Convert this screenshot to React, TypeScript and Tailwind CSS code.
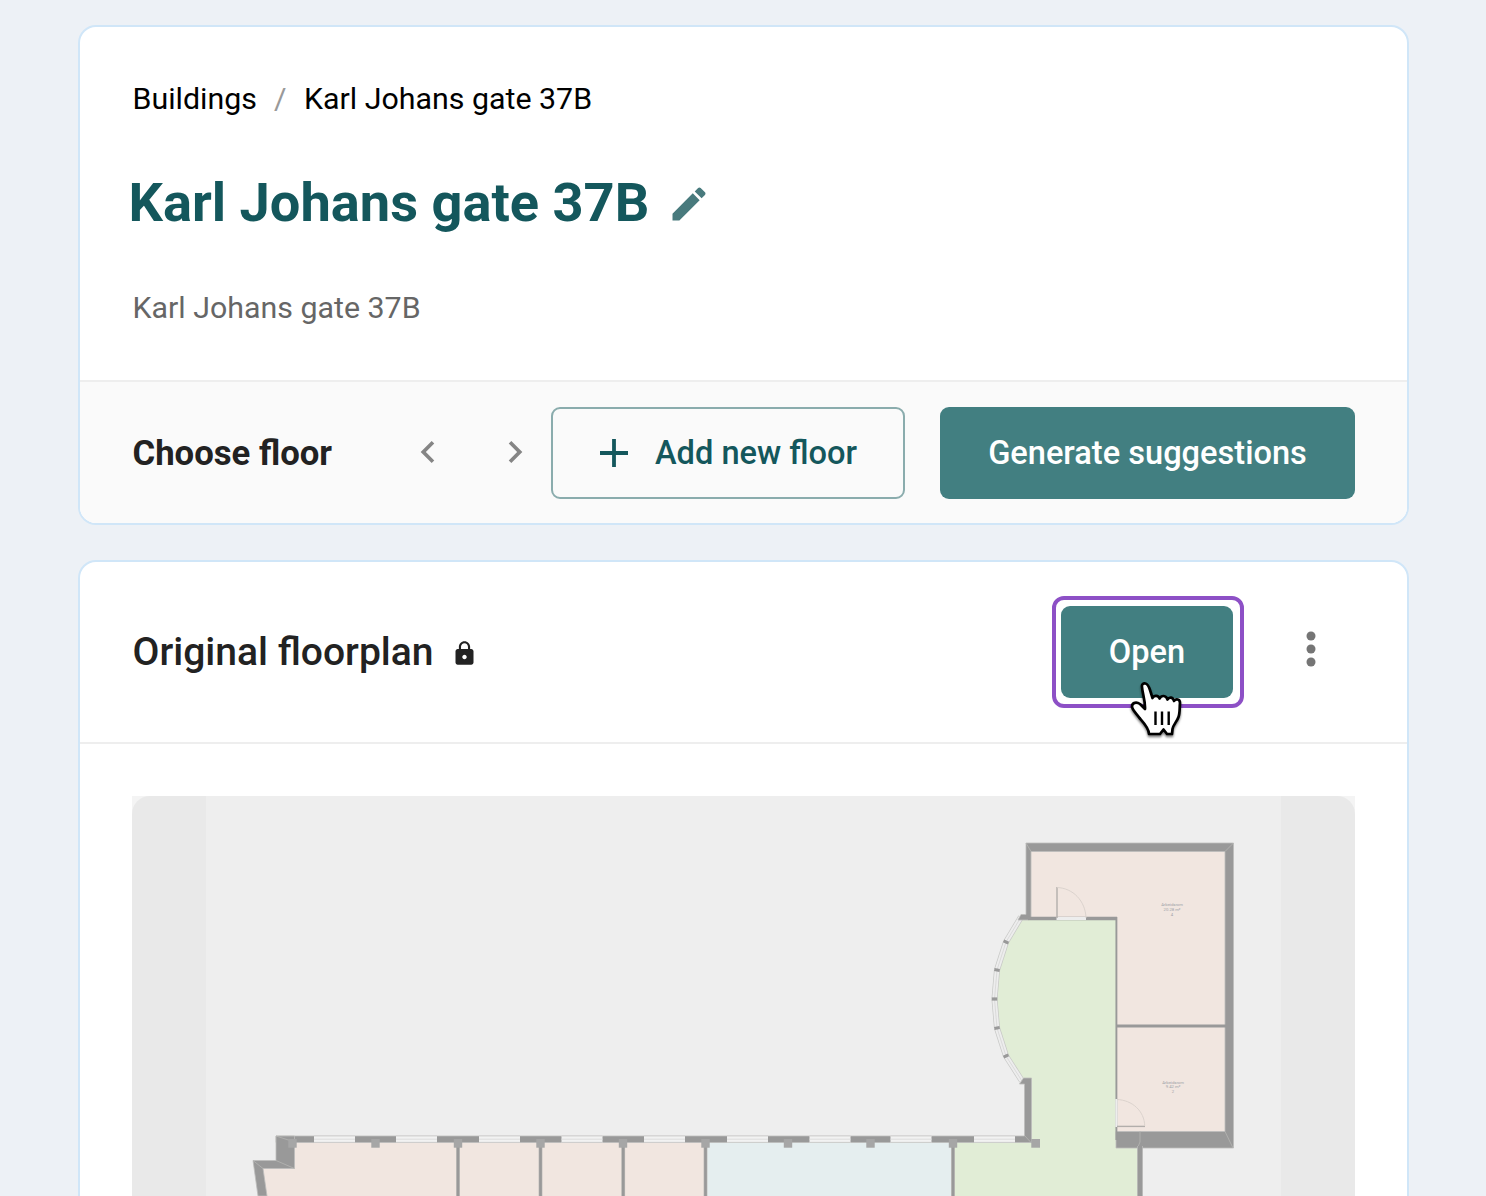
import React from "react";

const WALL = "#999999";
const ROOM = "#f1e6e0";
const GREEN = "#e1edd6";
const BLUE = "#e5eeef";

const wallWindows = [314, 396, 479, 561.5, 644, 727, 809.5, 890.5, 974];
const pillars = [292.5, 375.5, 458, 540.5, 623, 705.5, 788, 870.5, 953];
const partitions = [458, 540.5, 623.2, 705.5, 953];
const bay: [number, number][] = [
  [1021, 917],
  [1006, 942],
  [997, 970],
  [994.5, 999],
  [997, 1028],
  [1006, 1056],
  [1022, 1081],
];

function FloorPlan() {
  return (
    <svg className="block h-full w-full" viewBox="132 796 1223 400" fill="none">
      {/* rooms */}
      <path d="M1029 848H1229V1136H1116V918H1029Z" fill={ROOM} />
      <path d="M1021 918H1116V1136H1140V1196H953V1141H1029V1080H1022L1006 1056L997 1028L994.5 999L997 970L1006 942Z" fill={GREEN} />
      <path d="M285 1141H706V1196H264L256 1162H290Z" fill={ROOM} />
      <path d="M706 1141H953V1196H706Z" fill={BLUE} />

      {/* bay window */}
      {bay.slice(0, -1).map(([x, y], i) => {
        const [x2, y2] = bay[i + 1];
        return (
          <g key={i}>
            <path d={`M${x} ${y}L${x2} ${y2}`} stroke="#c6c7c5" strokeWidth="6" />
            <path d={`M${x} ${y}L${x2} ${y2}`} stroke="#ededed" strokeWidth="4.6" />
            <path d={`M${x} ${y}L${x2} ${y2}`} stroke="#d8d8d8" strokeWidth="0.9" />
          </g>
        );
      })}
      {bay.slice(1, -1).map(([x, y], i) => (
        <rect key={i} x={x - 2.7} y={y - 1.6} width="5.4" height="3.2" fill={WALL} transform={`rotate(${[25, 10, 0, -10, -25][i]} ${x} ${y})`} />
      ))}

      {/* outer walls */}
      <g stroke="#bdbdbb" strokeWidth="0.8" fill={WALL}>
        <path d="M1026 843H1233.500V1148H1116V1131.500H1225V851.500H1031V917.500L1028 920H1018L1021 914.500H1026Z" />
        <path d="M1024.500 1084H1019.500L1023.500 1078H1031.500V1142.500H276V1136H1024.500Z" />
        <path d="M276 1136H294.500V1168.500H263L267 1196H258L253 1160.500H276Z" />
      </g>
      <path d="M1026 843L1031 851.500M1233.500 843L1225 851.500M1225 1131.500L1233 1148M1140 1131V1142L1137.500 1148M1025 1136L1031 1142.500M276 1136L294.500 1142M276 1160.500L294.500 1168.500M253 1160.500L263 1168.500" stroke="#b5b5b3" strokeWidth="0.8" />
      <path d="M1028 918.500H1117" stroke={WALL} strokeWidth="3.400" />
      <path d="M1116.400 917V1140" stroke={WALL} strokeWidth="1.900" />
      <path d="M1117 1026H1226" stroke={WALL} strokeWidth="3.200" />
      <path d="M1140 1146V1196" stroke="#bdbdbb" strokeWidth="5.800" />
      <path d="M1140 1146V1196" stroke={WALL} strokeWidth="4.400" />

      {/* doors */}
      <path d="M1056.500 918.500H1086" stroke="#ededed" strokeWidth="3" />
      <path d="M1057 887V918" stroke="#b2aeab" strokeWidth="1.400" />
      <path d="M1057 887.500C1073 888 1085.500 901 1086 918" stroke="#d8d0cb" strokeWidth="0.900" />
      <path d="M1116.400 1099V1127" stroke="#ededed" strokeWidth="2.200" />
      <path d="M1117 1126.400H1145" stroke="#b2aeab" strokeWidth="1.400" />
      <path d="M1117 1099.500C1132 1100 1144.500 1111 1144.700 1126" stroke="#d8d0cb" strokeWidth="0.900" />

      {/* long facade */}
      {partitions.map((x) => (
        <g key={x}>
          <path d={`M${x} 1142V1196`} stroke="#bdbbb8" strokeWidth="3.8" />
          <path d={`M${x} 1142V1196`} stroke={WALL} strokeWidth="2.6" />
        </g>
      ))}
      {wallWindows.map((x) => (
        <g key={x}>
          <rect x={x} y="1135.500" width="41" height="7.200" fill="#f2f2f2" />
          <path d={`M${x} 1135.900h41M${x} 1142.400h41`} stroke="#c9c8c7" strokeWidth="0.9" />
          <path d={`M${x} 1139.200h41`} stroke="#dadada" strokeWidth="0.9" />
        </g>
      ))}
      {pillars.map((x) => (
        <rect key={x} x={x - 4.2} y="1139" width="8.400" height="8.700" fill="#a6a6a6" />
      ))}
      <rect x="1031.300" y="1139" width="8.700" height="8.700" fill="#a6a6a6" />

      <g fill="#a0a3a8" fontSize="4.2" textAnchor="middle" fontFamily="Roboto, sans-serif">
        <text x="1172" y="905.500">Arbeidsrom</text>
        <text x="1172" y="911">20.28 m²</text>
        <text x="1172" y="915.500">4</text>
        <text x="1173" y="1083.500">Arbeidsrom</text>
        <text x="1173" y="1088">9.42 m²</text>
        <text x="1173" y="1093">2</text>
      </g>
    </svg>
  );
}

function HandCursor() {
  return (
    <svg className="absolute top-[80px] left-[72px] h-[62px] w-[58px] drop-shadow-[0_2px_1px_rgba(0,0,0,0.5)]" viewBox="1128 680 58 62">
      <path
        d="M1142 687C1141.500 684 1143.500 683 1145.500 683.500C1148 684 1149 687 1150 690L1152.500 698C1154 695 1158.500 695 1159.500 698.500C1161.500 695 1166 695 1167.500 699.500C1169.500 696.500 1173 697 1174 701C1176 698.500 1180 699 1180 703C1179.500 708 1180 713 1178.500 717C1177 721.500 1173 725 1172.500 729L1172 734H1167L1163.500 729.500L1160 734H1149C1149 728 1143 722 1139.500 718C1137 714 1132 710 1132 706.500C1132 702 1137 702 1140 704L1145 709C1145.500 701 1142.500 694 1142 687Z"
        fill="white" stroke="black" strokeWidth="2.700" strokeLinejoin="round"
      />
      <path d="M1155.500 711.500V725M1162 711.500V725M1168.700 711.500V725" stroke="black" strokeWidth="2.400" />
    </svg>
  );
}

export default function App() {
  return (
    <main className="flex h-[1196px] w-[1486px] flex-col gap-[35px] overflow-hidden bg-[#edf1f6] pt-[25px] pr-[77px] pl-[78px] font-['Roboto',sans-serif] text-[#222222]">
      <section className="flex h-[500px] shrink-0 flex-col overflow-hidden rounded-[18px] border-2 border-[#d0e6f8] bg-white">
        <header className="flex h-[355px] shrink-0 flex-col border-b-2 border-[#eeeeee] px-[52px]">
          <nav className="mt-[52px] flex h-10 items-center text-[30.35px] leading-10 whitespace-nowrap text-black">
            <span className="w-[142px] pl-[0.5px]">Buildings</span>
            <span className="w-[30px] text-[#999999]">/</span>
            <span>Karl Johans gate 37B</span>
          </nav>
          <div className="mt-[51px] -ml-[3.5px] flex h-[66px] items-center whitespace-nowrap text-[#14575c]">
            <h1 className="w-[538px] text-[54.2px] leading-[66px] font-bold">Karl Johans gate 37B</h1>
            <svg className="mt-[2px] h-[44px] w-[44px]" viewBox="0 0 24 24" fill="#487a7d">
              <path d="M3 17.250V21h3.750L17.810 9.940l-3.750-3.750L3 17.250zM20.710 7.040c.390-.390.390-1.020 0-1.410l-2.340-2.340a.996.996 0 0 0-1.410 0l-1.830 1.830 3.750 3.750 1.830-1.830z" />
            </svg>
          </div>
          <p className="mt-[52px] pl-[0.5px] text-[30.35px] leading-10 text-[#666666]">Karl Johans gate 37B</p>
        </header>
        <div className="flex flex-1 items-center bg-[#fafafa] pl-[52.5px] whitespace-nowrap">
          <h2 className="mt-[1px] w-[273px] text-[34.7px] font-bold">Choose floor</h2>
          <svg className="mb-[2px] h-[44px] w-[44px]" viewBox="0 0 24 24" fill="#858585">
            <path d="M15.410 7.410 14 6l-6 6 6 6 1.410-1.410L10.830 12z" />
          </svg>
          <svg className="mb-[2px] ml-[43px] h-[44px] w-[44px]" viewBox="0 0 24 24" fill="#858585">
            <path d="M10 6 8.590 7.410 13.170 12l-4.580 4.590L10 18l6-6z" />
          </svg>
          <button className="ml-[14.5px] flex h-[92px] w-[354px] items-center rounded-[9px] border-2 border-[#8aacad] pl-[47px] text-[32.6px] font-medium text-[#14575c]">
            <svg className="mr-[27px] h-7 w-7" viewBox="0 0 28 28" stroke="#14575c" strokeWidth="3.800">
              <path d="M0 14H28M14 0V28" />
            </svg>
            <span className="pt-px">Add new floor</span>
          </button>
          <button className="ml-[35px] flex h-[92px] w-[415px] items-center justify-center rounded-[9px] bg-[#427f81] pt-px text-[32.6px] font-medium text-white">Generate suggestions</button>
        </div>
      </section>
      <section className="flex h-[700px] shrink-0 flex-col rounded-[18px] border-2 border-[#d0e6f8] bg-white">
        <header className="flex h-[182px] shrink-0 items-center border-b-2 border-[#eeeeee] pl-[52px]">
          <h2 className="w-[319px] pl-[0.5px] text-[39.05px] font-medium whitespace-nowrap">Original floorplan</h2>
          <svg className="mt-[2px] h-[27px] w-[27px]" viewBox="0 0 24 24" fill="#222222">
            <path d="M18 8h-1V6c0-2.760-2.240-5-5-5S7 3.240 7 6v2H6c-1.100 0-2 .900-2 2v10c0 1.100.900 2 2 2h12c1.100 0 2-.900 2-2V10c0-1.100-.900-2-2-2zm-6 9c-1.100 0-2-.900-2-2s.900-2 2-2 2 .900 2 2-.900 2-2 2zm3.100-9H8.900V6c0-1.710 1.390-3.100 3.100-3.100 1.710 0 3.100 1.390 3.100 3.100v2z" />
          </svg>
          <div className="relative ml-[574px] flex h-[112px] w-[192px] items-center justify-center rounded-[12px] border-4 border-[#8d50c6] pr-[2px]">
            <button className="h-[92px] w-[172px] rounded-[9px] bg-[#427f81] text-[32.6px] font-medium text-white">Open</button>
            <HandCursor />
          </div>
          <svg className="mb-[6px] ml-[45px] h-[52px] w-[44px]" viewBox="0 0 44 52" fill="#757575">
            <circle cx="22" cy="13" r="4.500" />
            <circle cx="22" cy="26" r="4.500" />
            <circle cx="22" cy="39" r="4.500" />
          </svg>
        </header>
        <div className="mt-[52px] ml-[52px] h-[400px] w-[1223px] bg-[#f4f4f4]">
          <div className="h-full overflow-hidden rounded-t-[18px] bg-[#e9e9e9]">
            <div className="h-full bg-[linear-gradient(to_right,transparent_74px,#eeeeee_74px,#eeeeee_1149px,transparent_1149px)]">
              <FloorPlan />
            </div>
          </div>
        </div>
      </section>
    </main>
  );
}
